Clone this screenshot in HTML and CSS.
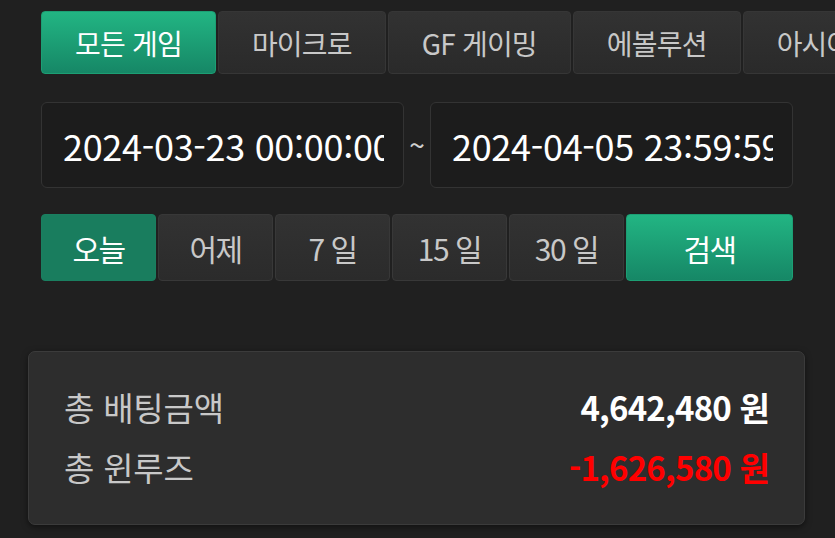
FILE: index.html
```html
<!DOCTYPE html>
<html lang="ko">
<head>
<meta charset="utf-8">
<link rel="stylesheet" href="styles.css">
</head>
<body>
<div class="page">
  <nav class="tabs">
    <div class="tab active">모든 게임</div>
    <div class="tab">마이크로</div>
    <div class="tab">GF 게이밍</div>
    <div class="tab">에볼루션</div>
    <div class="tab">아시아 게이밍</div>
  </nav>

  <div class="dates">
    <div class="date-box"><div class="date-clip">2024-03-23 00:00:00</div></div>
    <span class="tilde">~</span>
    <div class="date-box"><div class="date-clip">2024-04-05 23:59:59</div></div>
  </div>

  <div class="ranges">
    <button class="range today">오늘</button>
    <button class="range">어제</button>
    <button class="range">7 일</button>
    <button class="range">15 일</button>
    <button class="range">30 일</button>
    <button class="range search">검색</button>
  </div>

  <div class="summary">
    <div class="row">
      <span class="label">총 배팅금액</span>
      <span class="value">4,642,480 원</span>
    </div>
    <div class="row">
      <span class="label">총 윈루즈</span>
      <span class="value neg">-1,626,580 원</span>
    </div>
  </div>
</div>
</body>
</html>
```

FILE: styles.css
```css
html, body {
  margin: 0;
  padding: 0;
  background: #202020;
  overflow: hidden;
}

body {
  font-family: "Noto Sans CJK KR", "Noto Sans", sans-serif;
  color: #c9c9c9;
}

.page {
  width: 835px;
  height: 538px;
  overflow: hidden;
}

.tabs {
  display: flex;
  gap: 2px;
  margin: 11px 0 0 41px;
  height: 63px;
  white-space: nowrap;
}

.tab {
  flex: none;
  display: flex;
  align-items: center;
  justify-content: center;
  padding: 0 33px;
  background: linear-gradient(#323232, #2a2a2a);
  border: 1px solid #363636;
  border-radius: 4px;
  font-size: 28px;
  color: #c8c8c8;
  letter-spacing: -0.8px;
}

.tab.active {
  background: linear-gradient(#22b583, #168766);
  border-color: #1c9f74;
  color: #ffffff;
}

.dates {
  display: flex;
  align-items: center;
  margin: 28px 0 0 41px;
  width: 752px;
}

.date-box {
  width: 363px;
  height: 86px;
  border: 1px solid #333333;
  border-radius: 6px;
  background: #1c1c1c;
  display: flex;
  align-items: center;
  padding: 0 19px 0 21px;
  box-sizing: border-box;
}

.date-clip {
  flex: 1;
  overflow: hidden;
  white-space: nowrap;
  font-size: 36px;
  color: #ffffff;
  letter-spacing: -0.3px;
}

.tilde {
  width: 26px;
  text-align: center;
  font-size: 28px;
  color: #d0d0d0;
  margin-top: -2px;
}

.ranges {
  display: grid;
  grid-template-columns: repeat(5, 115px) 1fr;
  gap: 2px;
  margin: 26px 0 0 41px;
  width: 752px;
  height: 67px;
}

.range {
  font-family: inherit;
  font-size: 30px;
  color: #c8c8c8;
  background: linear-gradient(#323232, #2b2b2b);
  border: 1px solid #383838;
  border-radius: 4px;
  padding: 0;
  letter-spacing: -1.5px;
}

.range.today {
  background: #197d5e;
  border-color: #1a7f60;
  color: #ffffff;
}

.range.search {
  background: linear-gradient(#22b583, #168766);
  border-color: #1c9f74;
  color: #ffffff;
}

.summary {
  margin: 70px 0 0 28px;
  width: 777px;
  height: 174px;
  box-sizing: border-box;
  background: #2d2d2d;
  border: 1px solid #3b3b3b;
  border-radius: 7px;
  box-shadow: 0 2px 6px rgba(0, 0, 0, 0.5);
  padding: 33px 35px 0 35px;
  display: flex;
  flex-direction: column;
  gap: 16px;
}

.row {
  display: flex;
  justify-content: space-between;
  align-items: center;
  height: 44px;
}

.label {
  font-size: 33px;
  color: #c8c8c8;
  letter-spacing: -0.2px;
}

.value {
  font-size: 33px;
  font-weight: 700;
  color: #ffffff;
  letter-spacing: -0.8px;
}

.value.neg {
  color: #ff0000;
}
```
